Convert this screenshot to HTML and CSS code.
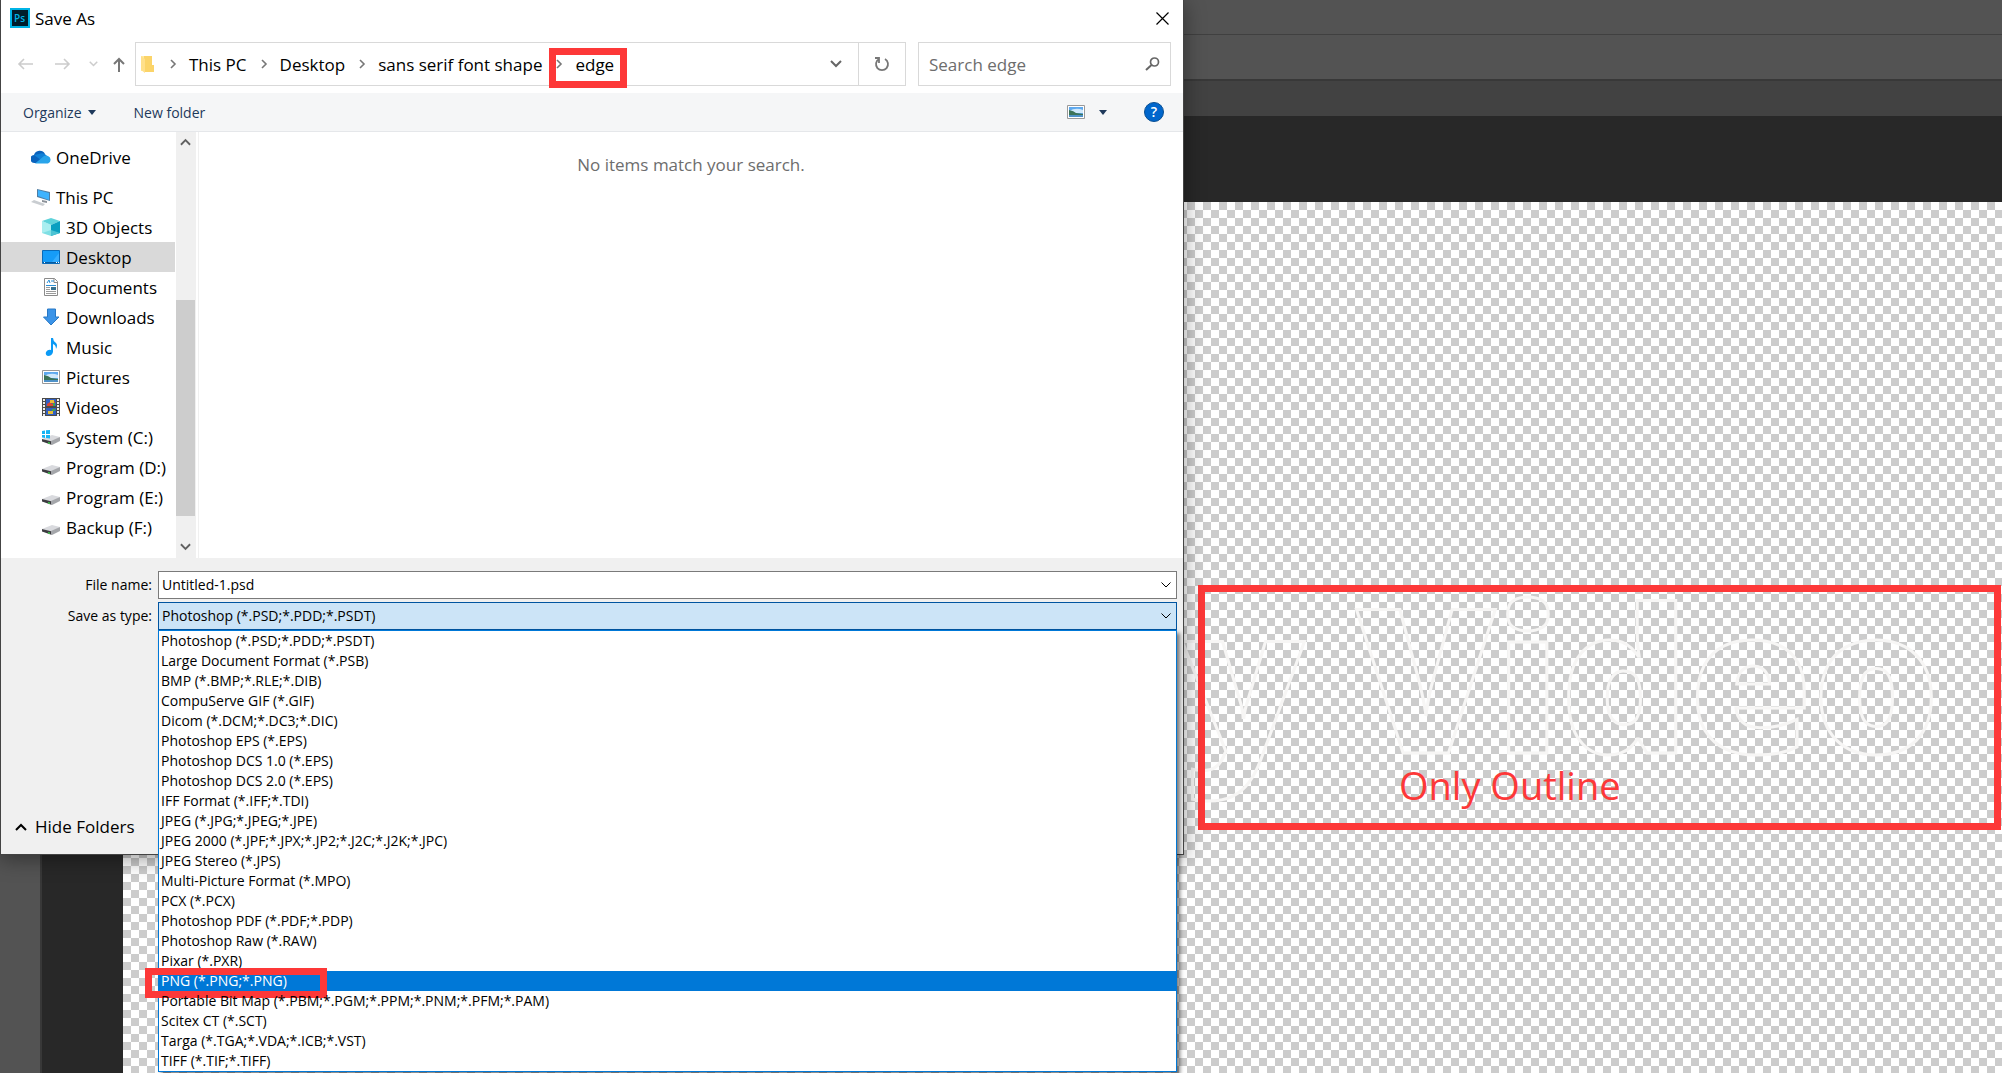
FILE: index.html
```html
<!DOCTYPE html>
<html lang="en">
<head>
<meta charset="utf-8">
<title>Save As</title>
<link rel="stylesheet" href="styles.css">
</head>
<body>
<svg class="defs" aria-hidden="true">
  <symbol id="drive" viewBox="0 0 18 10">
    <path d="M0 4l10-4 8 2-8 5z" fill="#d9dade"/>
    <path d="M0 4l10 2.500V10L0 6.500z" fill="#3c3c40"/>
    <path d="M9 6l9-4v4l-8 4H9z" fill="#a4a6aa"/>
    <path d="M6 7l2 .5V9L6 8.500z" fill="#3fc24b"/>
  </symbol>
  <symbol id="picture" viewBox="0 0 18 14">
    <path d="M.5.500h17v13H.5z" fill="#fff" stroke="#999"/>
    <path d="M2 2h14v10H2z" fill="#5ea9ee"/>
    <path d="M2 6q7-4 14-1v3H2z" fill="#cfe8fb"/>
    <path d="M2 5q5 1 7 3l7 1v1H2z" fill="#3c7358"/>
    <path d="M2 10h14v2H2z" fill="#4f92c8"/>
  </symbol>
  <symbol id="down" viewBox="0 0 12 8"><path d="M1 1l5 5 5-5" fill="none" stroke="currentColor" stroke-width="2"/></symbol>
  <symbol id="thin-down" viewBox="0 0 12 8"><path d="M1.500 1.500L6 6l4.500-4.500" fill="none" stroke="currentColor" stroke-width="1"/></symbol>
  <symbol id="next" viewBox="0 0 8 10"><path d="M2 1l4 4-4 4" fill="none" stroke="currentColor" stroke-width="1.600"/></symbol>
</svg>

<main class="app">
  <div class="menu-band"></div>
  <div class="options-band"></div>
  <div class="tab-band"></div>
  <div class="workspace">
    <div class="tool-strip"></div>
    <div class="pasteboard">
      <div class="canvas">
        <div class="artwork">y Video</div>
        <div class="callout callout-art">Only Outline</div>
      </div>
    </div>
  </div>

  <section class="dialog" aria-label="Save As">
    <header class="titlebar">
      <svg class="ps" viewBox="0 0 20 20"><path d="M0 0h20v20H0z" fill="#00b4e6"/><path d="M2 2h16v16H2z" fill="#001d2b"/><text x="4" y="14" font-family="Open Sans" font-weight="600" font-size="10" fill="#00b4e6">Ps</text></svg>
      <h1 class="title">Save As</h1>
      <button class="close" aria-label="Close"><svg width="13" height="13" viewBox="0 0 13 13"><path d="M.5.500l12 12M12.500.500l-12 12" stroke="#000" stroke-width="1.200"/></svg></button>
    </header>

    <nav class="navbar">
      <div class="history">
        <button class="faint" aria-label="Back"><svg width="16" height="12" viewBox="0 0 16 12"><path d="M16 6H2M7 1L2 6l5 5" fill="none" stroke="currentColor" stroke-width="1.600"/></svg></button>
        <button class="faint" aria-label="Forward"><svg width="16" height="12" viewBox="0 0 16 12"><path d="M0 6h14M9 1l5 5-5 5" fill="none" stroke="currentColor" stroke-width="1.600"/></svg></button>
        <button class="faint" aria-label="Recent"><svg width="9" height="6"><use href="#down"/></svg></button>
        <button aria-label="Up"><svg width="12" height="15" viewBox="0 0 12 15"><path d="M6 15V2M1 7l5-5 5 5" fill="none" stroke="currentColor" stroke-width="2"/></svg></button>
      </div>
      <div class="address">
        <svg class="folder" viewBox="0 0 13 18"><path d="M0 1h5v15H0z" fill="#ffe9a2"/><path d="M3 1h8v9h2v7H3z" fill="#fbd469"/><path d="M0 15l4 3V4L0 1z" fill="#ffe08a"/></svg>
        <svg class="sep"><use href="#next"/></svg><a href="#">This PC</a>
        <svg class="sep"><use href="#next"/></svg><a href="#">Desktop</a>
        <svg class="sep"><use href="#next"/></svg><a href="#">sans serif font shape</a>
        <span class="last"><svg class="sep"><use href="#next"/></svg><a href="#">edge</a><span class="callout callout-edge"></span></span>
        <button class="history-drop" aria-label="Previous locations"><svg width="12" height="8"><use href="#down"/></svg></button>
        <button class="refresh" aria-label="Refresh"><svg width="16" height="16" viewBox="0 0 16 16"><path d="M11 3a6 6 0 1 1-6 0M5 7V2H1" fill="none" stroke="currentColor" stroke-width="1.800"/></svg></button>
      </div>
      <div class="search">
        <input type="search" aria-label="Search edge" placeholder="Search edge">
        <svg width="15" height="14" viewBox="0 0 15 14"><circle cx="9.500" cy="5" r="4" fill="none" stroke="#666" stroke-width="1.700"/><path d="M6.500 8L1 13" stroke="#666" stroke-width="2"/></svg>
      </div>
    </nav>

    <div class="toolbar">
      <button class="organize">Organize <svg width="8" height="5" viewBox="0 0 8 5"><path d="M0 0h8L4 5z" fill="#1e395b"/></svg></button>
      <button>New folder</button>
      <button class="view" aria-label="Change view"><svg width="18" height="14"><use href="#picture"/></svg><svg width="8" height="5" viewBox="0 0 8 5"><path d="M0 0h8L4 5z" fill="#1e395b"/></svg></button>
      <button class="help" aria-label="Help">?</button>
    </div>

    <div class="browser">
      <ul class="tree">
        <li class="root"><svg viewBox="0 0 20 14"><path d="M4 13a4 4 0 0 1-1-8A6 6 0 0 1 14 4l-6 9z" fill="#0a63bd"/><path d="M8 4a6 6 0 0 1 8 2l-6 4-7-5z" fill="#1181d7"/><path d="M4 13.500L13 6q2-1 4 0a4 4 0 0 1 0 7.500z" fill="#29a4ea"/></svg>OneDrive</li>
        <li class="root spaced"><svg viewBox="0 0 20 18"><path d="M6 1l13 3v9L6 9z" fill="#4f7da3"/><path d="M7 2l11 3v7L7 8z" fill="#3db3ff"/><path d="M11 12l5 1v2l-5-1z" fill="#8c9299"/><path d="M0 14l3-2 11 4-2 2z" fill="#c9cdd1"/></svg>This PC</li>
        <li><svg viewBox="0 0 18 18"><path d="M0 3l9-3 9 3-9 4z" fill="#5fd3da"/><path d="M0 3l9 4v11l-9-3z" fill="#7fdfe4"/><path d="M9 7l9-4v12l-9 3z" fill="#0a9fc0"/><path d="M0 3l9 4v5l-9 3z" fill="#a9eef0"/><path d="M9 12l9 3-9 3z" fill="#4cc3d3"/></svg>3D Objects</li>
        <li class="selected"><svg viewBox="0 0 18 14"><path d="M.5.500h17v13H.5z" fill="#169cf8" stroke="#0a6ab8"/><path d="M10 12l7-9v9z" fill="#35adff"/><path d="M1 12h16v1H1z" fill="#075a9e"/><path d="M2 12.500h1m11 0h1m1 0h1" stroke="#fff"/></svg>Desktop</li>
        <li><svg viewBox="0 0 18 18"><path d="M2.500.500h10l3 3v14h-13z" fill="#fff" stroke="#8b8b8b"/><path d="M12 .5v4h4" fill="none" stroke="#8b8b8b"/><path d="M5 5l2-3 1 3M9 3h3M4 7.500h10" fill="none" stroke="#2b8fd6"/><path d="M9 9h5v3H9z" fill="#37708f"/><path d="M4 9.500h4M4 11.500h4M4 13.500h10M4 15.500h10" stroke="#9b9b9b"/></svg>Documents</li>
        <li><svg viewBox="0 0 18 18"><path d="M5.500 1h8v8H17l-8 8-7.500-8h4z" fill="#3b94e8" stroke="#2878c5"/></svg>Downloads</li>
        <li><svg viewBox="0 0 18 18"><path d="M9 0h2q0 3 3 5 2 2 0 6 0-4-3-5v8q-1 4-5 4-3-1-2-4 2-3 5-2z" fill="#0b9af5"/></svg>Music</li>
        <li><svg viewBox="0 0 18 14"><use href="#picture"/></svg>Pictures</li>
        <li><svg viewBox="0 0 18 18"><path d="M0 0h18v18H0z" fill="#4b4b4b"/><path d="M2 1v17M16 1v17" stroke="#eee" stroke-width="2" stroke-dasharray="2 1"/><path d="M4 1h10v7H4zM4 10h10v7H4z" fill="#315fc2"/><path d="M5 6l3-2 2 2 3-3v5H5z" fill="#e2452f"/><path d="M8 2h4v3H8zM6 13h5v3H6z" fill="#e7bd36"/><path d="M11 5h2v3h-2zM10 11h3v2h-3z" fill="#42a548"/></svg>Videos</li>
        <li><svg viewBox="0 0 18 18"><use href="#drive" y="7" width="18" height="10"/><path d="M0 3l3-.5V6H0zM4 2.300L8 2v4H4zM0 7h3v3L0 9.500zM4 7h4v3.500L4 10z" fill="#16b4f4"/></svg>System (C:)</li>
        <li><svg viewBox="0 0 18 18"><use href="#drive" y="7" width="18" height="10"/></svg>Program (D:)</li>
        <li><svg viewBox="0 0 18 18"><use href="#drive" y="7" width="18" height="10"/></svg>Program (E:)</li>
        <li><svg viewBox="0 0 18 18"><use href="#drive" y="7" width="18" height="10"/></svg>Backup (F:)</li>
      </ul>
      <div class="scrollbar">
        <svg class="flip" width="11" height="8"><use href="#down"/></svg>
        <div class="track"><div class="thumb"></div></div>
        <svg width="11" height="8"><use href="#down"/></svg>
      </div>
      <div class="files">No items match your search.</div>
    </div>

    <form class="form">
      <label for="name">File name:</label>
      <div class="field"><input id="name" type="text" value="Untitled-1.psd"><svg width="12" height="8"><use href="#thin-down"/></svg></div>
      <label for="type">Save as type:</label>
      <div class="field type">
        <select id="type"><option>Photoshop (*.PSD;*.PDD;*.PSDT)</option></select><svg width="12" height="8"><use href="#thin-down"/></svg>
        <ul class="options" role="listbox" aria-label="Save as type">
          <li role="option">Photoshop (*.PSD;*.PDD;*.PSDT)</li>
          <li role="option">Large Document Format (*.PSB)</li>
          <li role="option">BMP (*.BMP;*.RLE;*.DIB)</li>
          <li role="option">CompuServe GIF (*.GIF)</li>
          <li role="option">Dicom (*.DCM;*.DC3;*.DIC)</li>
          <li role="option">Photoshop EPS (*.EPS)</li>
          <li role="option">Photoshop DCS 1.0 (*.EPS)</li>
          <li role="option">Photoshop DCS 2.0 (*.EPS)</li>
          <li role="option">IFF Format (*.IFF;*.TDI)</li>
          <li role="option">JPEG (*.JPG;*.JPEG;*.JPE)</li>
          <li role="option">JPEG 2000 (*.JPF;*.JPX;*.JP2;*.J2C;*.J2K;*.JPC)</li>
          <li role="option">JPEG Stereo (*.JPS)</li>
          <li role="option">Multi-Picture Format (*.MPO)</li>
          <li role="option">PCX (*.PCX)</li>
          <li role="option">Photoshop PDF (*.PDF;*.PDP)</li>
          <li role="option">Photoshop Raw (*.RAW)</li>
          <li role="option">Pixar (*.PXR)</li>
          <li role="option" class="active" aria-selected="true">PNG (*.PNG;*.PNG)<span class="callout callout-png"></span></li>
          <li role="option">Portable Bit Map (*.PBM;*.PGM;*.PPM;*.PNM;*.PFM;*.PAM)</li>
          <li role="option">Scitex CT (*.SCT)</li>
          <li role="option">Targa (*.TGA;*.VDA;*.ICB;*.VST)</li>
          <li role="option">TIFF (*.TIF;*.TIFF)</li>
        </ul>
      </div>
    </form>
    <footer class="footer"><button class="hide"><svg class="flip" width="12" height="8"><use href="#down"/></svg>Hide Folders</button></footer>
  </section>
</main>
</body>
</html>
```
FILE: styles.css
```css
* { box-sizing: border-box; }
body { margin: 0; font-family: "Open Sans", "Noto Sans", sans-serif; font-size: 17px; color: #000; }
button, input, select { font: inherit; color: inherit; border: 0; background: none; padding: 0; margin: 0; outline: 0; }
ul { list-style: none; margin: 0; padding: 0; }
a { color: inherit; text-decoration: none; }
svg { flex: none; display: block; }
.defs { position: absolute; width: 0; height: 0; }

/* Editor behind the dialog */
.app { position: relative; display: flex; flex-direction: column; height: 100vh; overflow: hidden; background: #282828; }
.menu-band { height: 35px; background: #535353; border-bottom: 1px solid #404040; }
.options-band { height: 46px; background: #535353; border-bottom: 2px solid #383838; }
.tab-band { height: 35px; background: #424242; }
.workspace { flex: 1; display: flex; }
.tool-strip { width: 42px; background: #535353; border-right: 2px solid #383838; }
.pasteboard { flex: 1; display: flex; padding: 86px 0 0 81px; }
.canvas { position: relative; flex: 1; background: conic-gradient(#ccc 25%, #fff 0 50%, #ccc 0 75%, #fff 0) 0 0 / 16px 16px; }
.artwork { position: absolute; right: 62px; top: 354px; font-size: 200px; line-height: 240px; font-weight: 800; white-space: nowrap; color: transparent; -webkit-text-stroke: 3px #f7f6f5; }

/* Red markers */
.callout { position: absolute; border: 7px solid #fd3838; color: #fd3838; }
.callout-art { right: 1px; top: 383px; width: 803px; height: 245px; padding: 163px 0 0 194px; font-size: 38px; line-height: 60px; }
.callout-edge { left: 7px; top: 5px; width: 78px; height: 40px; }
.callout-png { left: -14px; top: -3px; width: 182px; height: 30px; }

/* Dialog */
.dialog { position: absolute; left: 0; top: 0; width: calc(100% - 818px); height: 855px; display: flex; flex-direction: column; background: #fff; border: 1px solid #444; border-top: 0; box-shadow: 0 4px 20px rgba(0, 0, 0, .4); }
.titlebar { height: 38px; display: flex; align-items: center; padding: 0 14px 2px 9px; gap: 5px; }
.ps { width: 20px; height: 20px; }
.title { flex: 1; margin: 0; font-size: 17px; font-weight: 400; }
.navbar { height: 55px; display: flex; align-items: flex-start; padding: 4px 12px 0 16px; }
.history { width: 118px; height: 44px; display: flex; align-items: center; gap: 22px; color: #777; }
.history button:nth-child(3) { margin: 0 -7px 0 -4px; }
.history .faint { color: #ccc; }
.address { flex: 1; height: 44px; display: flex; align-items: center; border: 1px solid #d9d9d9; padding-left: 5px; line-height: 43px; white-space: nowrap; }
.folder { width: 13px; height: 18px; margin-right: 2px; }
.sep { width: 8px; height: 10px; margin: 0 12px 0 13px; color: #777; }
.last { position: relative; display: flex; align-items: center; }
.history-drop { margin-left: auto; margin-right: 16px; color: #666; }
.refresh { width: 47px; height: 42px; border-left: 1px solid #d9d9d9; color: #777; display: flex; align-items: center; justify-content: center; }
.search { width: 253px; height: 44px; margin-left: 12px; border: 1px solid #d9d9d9; display: flex; align-items: center; padding: 0 10px; }
.search input { flex: 1; min-width: 0; }
.search input::placeholder { color: #6d6d6d; opacity: 1; }
.toolbar { height: 39px; background: #f5f6f7; border-bottom: 1px solid #e5e7ea; display: flex; align-items: center; padding: 0 19px 0 22px; font-size: 14px; color: #1e395b; }
.organize { display: flex; align-items: center; gap: 6px; margin-right: 38px; }
.view { display: flex; align-items: center; gap: 14px; margin-left: auto; }
.help { width: 20px; height: 20px; margin-left: 37px; border: 1px solid #0a4f92; border-radius: 50%; background: #0066cc; color: #fff; font-weight: 600; line-height: 18px; }
.browser { height: 426px; display: flex; }
.tree { width: 175px; padding-top: 10px; white-space: nowrap; }
.tree li { height: 30px; width: 174px; display: flex; align-items: center; gap: 6px; padding-left: 41px; }
.tree svg { width: 18px; height: 18px; }
.tree .root { padding-left: 30px; gap: 5px; }
.tree .root svg { width: 20px; }
.tree .spaced { margin-top: 10px; }
.tree .selected { background: #d9d9d9; }
.scrollbar { width: 20px; display: flex; flex-direction: column; align-items: center; justify-content: space-between; padding: 6px 1px 7px 0; background: #f0f0f0; color: #606060; }
.flip { transform: rotate(180deg); }
.track { width: 19px; flex: 1; padding-top: 154px; }
.thumb { height: 216px; background: #cdcdcd; }
.files { flex: 1; margin-left: 2px; border-left: 1px solid #f0f0f0; padding-top: 18px; line-height: 30px; text-align: center; color: #6d6d6d; }
.form { display: grid; grid-template-columns: 151px 1fr; column-gap: 6px; row-gap: 3px; padding: 13px 6px 0 0; background: #f0f0f0; font-size: 14px; }
.form label { text-align: right; line-height: 28px; }
.field { position: relative; height: 28px; display: flex; align-items: center; border: 1px solid #7a7a7a; background: #fff; padding: 0 4px 1px 3px; }
.field input, .field select { flex: 1; min-width: 0; height: 25px; appearance: none; }
.type { border-color: #0054a0; background: #cce4f7; }
.options { position: absolute; z-index: 1; left: -1px; right: -1px; top: 27px; border: 1px solid #0078d7; background: #fff; box-shadow: 3px 3px 4px rgba(0, 0, 0, .5); }
.options li { position: relative; height: 20px; line-height: 20px; padding-left: 2px; }
.options .active { background: #0078d7; color: #fff; }
.footer { flex: 1; display: flex; align-items: flex-end; padding: 0 0 12px 14px; background: #f0f0f0; }
.hide { display: flex; align-items: center; gap: 8px; line-height: 30px; }
```
